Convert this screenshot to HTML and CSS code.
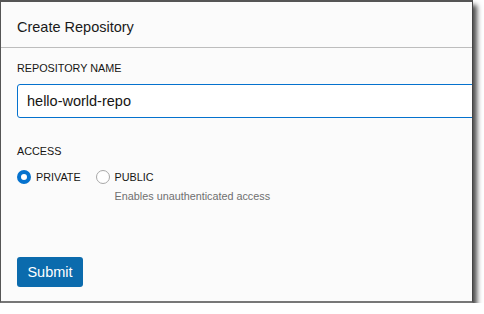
FILE: index.html
```html
<!DOCTYPE html>
<html lang="en">

<head>
  <meta charset="UTF-8">
  <meta name="viewport" content="width=device-width, initial-scale=1.0">
  <title>Create Repository</title>
  <link rel="stylesheet" href="styles.css">
</head>

<body>
  <div class="dialog">
    <div class="dialog-header">
      <h2>Create Repository</h2>
    </div>
    <form class="dialog-body">
      <label class="field-label" for="repo-name">REPOSITORY NAME</label>
      <input type="text" id="repo-name" class="text-input" value="hello-world-repo">

      <div class="field-label access-label">ACCESS</div>
      <div class="radio-group">
        <label class="radio-option">
          <span class="radio checked"></span>
          <span class="radio-text">PRIVATE</span>
        </label>
        <label class="radio-option">
          <span class="radio"></span>
          <span class="radio-text">PUBLIC</span>
          <span class="radio-hint">Enables unauthenticated access</span>
        </label>
      </div>

      <button type="button" class="submit-btn">Submit</button>
    </form>
  </div>
</body>

</html>
```

FILE: styles.css
```css
* {
  margin: 0;
  padding: 0;
  box-sizing: border-box;
}

body {
  font-family: "Liberation Sans", Arial, sans-serif;
  background: #ffffff;
  color: #161513;
}

.dialog {
  width: 473px;
  height: 303px;
  background: #fbfbfb;
  border-top: 2px solid #555;
  border-left: 1px solid #555;
  border-right: 1px solid #444;
  border-bottom: 2px solid #777;
  box-shadow: 4px 5px 5px rgba(0, 0, 0, 0.7);
  overflow: hidden;
}

.dialog-header {
  height: 46px;
  padding: 15px 16px 0;
  border-bottom: 1px solid #bdbdbd;
}

.dialog-header h2 {
  font-size: 14.5px;
  font-weight: normal;
  line-height: 20px;
  color: #1a1a1a;
}

.dialog-body {
  padding: 12px 16px 0;
  display: flex;
  flex-direction: column;
  align-items: flex-start;
}

.field-label {
  font-size: 10.8px;
  line-height: 16px;
  color: #161513;
}

.text-input {
  margin-top: 8px;
  width: 470px;
  height: 34px;
  padding: 0 9px;
  border: 1px solid #0572ce;
  border-radius: 3px;
  background: #fff;
  font-family: inherit;
  font-size: 14.5px;
  color: #161513;
  outline: none;
}

.access-label {
  margin-top: 25px;
}

.radio-group {
  margin-top: 10px;
  display: flex;
  align-items: flex-start;
  gap: 15px;
}

.radio-option {
  display: grid;
  grid-template-columns: 14px auto;
  column-gap: 5px;
  row-gap: 3px;
  align-items: center;
}

.radio {
  width: 14px;
  height: 14px;
  border-radius: 50%;
  border: 1px solid #a8a8a8;
  background: #fff;
}

.radio.checked {
  border: 4.5px solid #0572ce;
}

.radio-text {
  font-size: 10.8px;
  line-height: 16px;
}

.radio-hint {
  grid-column: 2;
  font-size: 10.8px;
  line-height: 16px;
  color: #6f6f6f;
}

.submit-btn {
  margin-top: 53px;
  width: 66px;
  height: 30px;
  background: #0b6bad;
  color: #fff;
  border: none;
  border-radius: 3px;
  font-family: inherit;
  font-size: 14.5px;
  cursor: pointer;
}
```
